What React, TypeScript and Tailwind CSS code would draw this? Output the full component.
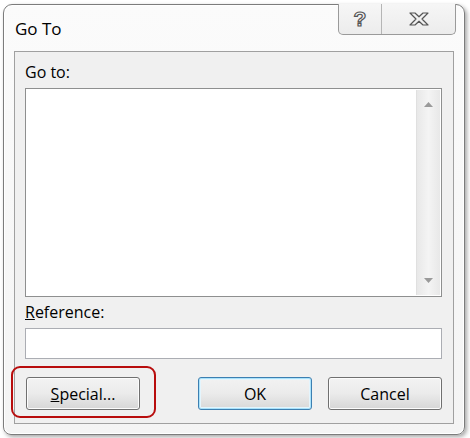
import React from 'react'

function Btn({ children, primary }: { children: React.ReactNode; primary?: boolean }) {
  return (
    <button
      className={
        primary
          ? 'w-[114px] h-[33px] rounded-[3px] border border-[#3c7fb1] bg-gradient-to-b from-[#f2f2f2] via-[#ebebeb] to-[#d8d8d8] shadow-[inset_0_0_0_1px_#a9e2fb,inset_0_0_0_2px_#e4f5fd] text-[16px] text-black'
          : 'w-[114px] h-[33px] rounded-[3px] border border-[#707070] bg-gradient-to-b from-[#f3f3f3] via-[#ebebeb] to-[#d6d6d6] shadow-[inset_0_0_0_1px_#fcfcfc] text-[16px] text-black'
      }
    >
      {children}
    </button>
  )
}

export default function App() {
  return (
    <div className="relative w-[470px] h-[438px] bg-white overflow-hidden" style={{ fontFamily: '"Open Sans", "Noto Sans", sans-serif' }}>
      <div className="ml-[3px] mt-[4px] w-[462px] h-[431px] rounded-t-[9px] rounded-b-[8px] border border-[#7c7c7c] bg-gradient-to-b from-[#fbfbfb] to-[#f4f4f4] shadow-[2px_2px_4px_rgba(0,0,0,0.35),inset_0_0_0_1px_#ffffff] flex flex-col">
        {/* title bar */}
        <div className="h-[46px] flex justify-between items-start">
          <div className="pl-[11px] pt-[15px] text-[17px] leading-none text-black">Go To</div>
          <div className="mr-[8px] -mt-px flex h-[31px] border border-t-0 border-[#9a9a9a] rounded-b-[5px] bg-gradient-to-b from-[#f6f6f6] to-[#ececec]">
            <div className="w-[43px] flex items-center justify-center border-r border-[#b5b5b5]">
              <span className="font-['Liberation_Sans',sans-serif] font-bold text-[21px] leading-none text-transparent [-webkit-text-stroke:1.2px_#555] -mt-[1px]">?</span>
            </div>
            <div className="w-[73px] flex items-center justify-center">
              <svg width="20" height="14" viewBox="0 0 20 14" fill="none" stroke="#555" strokeWidth="1.2" strokeLinejoin="round">
                <path d="M1 1 L6 1 L10 4.8 L14 1 L19 1 L13 7 L19 13 L14 13 L10 9.2 L6 13 L1 13 L7 7 Z" />
              </svg>
            </div>
          </div>
        </div>

        {/* content panel */}
        <div className="mx-[10px] h-[373px] border border-[#a0a0a0] bg-[#f0f0f0] pl-[10px] pr-[11px] flex flex-col">
          <div className="pt-[12px] h-[36px] text-[16px] leading-none text-black">Go to:</div>
          <div className="h-[209px] border border-[#8e8f8f] bg-white flex justify-end">
            <div className="w-[24px] m-px bg-gradient-to-r from-[#e8e8e8] via-[#f4f4f4] to-[#e8e8e8] border-l border-[#e0e0e0] flex flex-col items-center justify-between py-[12px]">
              <svg width="9" height="5" viewBox="0 0 9 5"><path d="M0 5 L4.5 0 L9 5 Z" fill="#9a9a9a" /></svg>
              <svg width="9" height="5" viewBox="0 0 9 5"><path d="M0 0 L9 0 L4.5 5 Z" fill="#9a9a9a" /></svg>
            </div>
          </div>
          <div className="pt-[7px] h-[31px] text-[16px] leading-none text-black">
            <u>R</u>eference:
          </div>
          <div className="h-[31px] border border-[#abadb3] bg-white" />
          <div className="mt-[18px] flex">
            <div className="ml-px">
              <Btn>
                <u>S</u>pecial...
              </Btn>
            </div>
            <div className="ml-[58px]">
              <Btn primary>OK</Btn>
            </div>
            <div className="ml-[16px]">
              <Btn>Cancel</Btn>
            </div>
          </div>
        </div>
      </div>

      {/* highlight annotation */}
      <div className="absolute left-[11px] top-[366px] w-[145px] h-[52px] rounded-[9px] border-2 border-[#b80d0d]" />
    </div>
  )
}
